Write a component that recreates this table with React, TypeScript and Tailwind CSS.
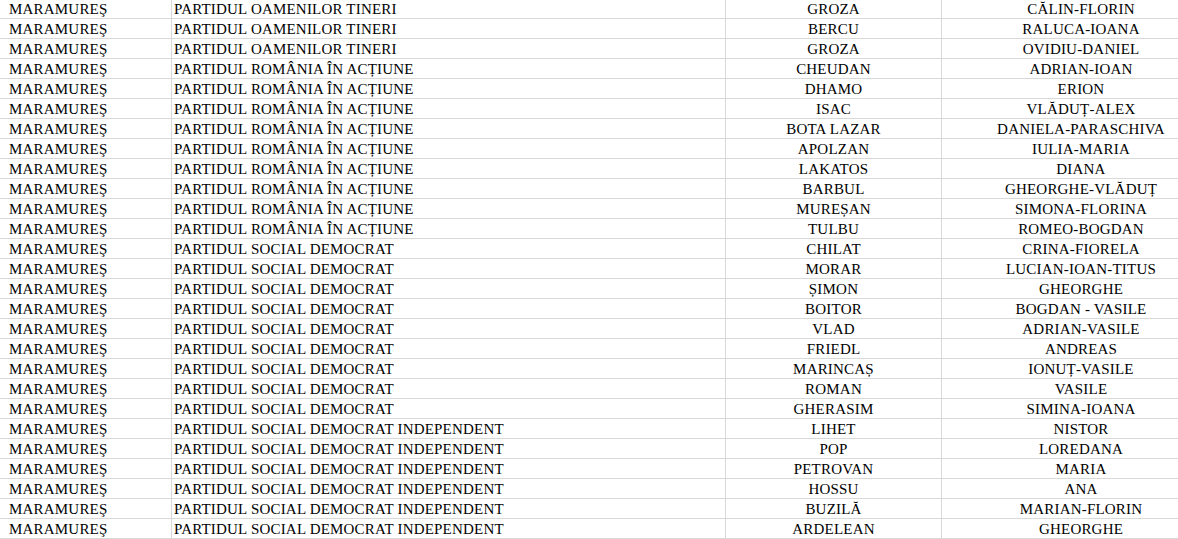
const rows: [string, string, string][] = [
  ['PARTIDUL OAMENILOR TINERI', 'GROZA', 'CĂLIN-FLORIN'],
  ['PARTIDUL OAMENILOR TINERI', 'BERCU', 'RALUCA-IOANA'],
  ['PARTIDUL OAMENILOR TINERI', 'GROZA', 'OVIDIU-DANIEL'],
  ['PARTIDUL ROMÂNIA ÎN ACȚIUNE', 'CHEUDAN', 'ADRIAN-IOAN'],
  ['PARTIDUL ROMÂNIA ÎN ACȚIUNE', 'DHAMO', 'ERION'],
  ['PARTIDUL ROMÂNIA ÎN ACȚIUNE', 'ISAC', 'VLĂDUȚ-ALEX'],
  ['PARTIDUL ROMÂNIA ÎN ACȚIUNE', 'BOTA LAZAR', 'DANIELA-PARASCHIVA'],
  ['PARTIDUL ROMÂNIA ÎN ACȚIUNE', 'APOLZAN', 'IULIA-MARIA'],
  ['PARTIDUL ROMÂNIA ÎN ACȚIUNE', 'LAKATOS', 'DIANA'],
  ['PARTIDUL ROMÂNIA ÎN ACȚIUNE', 'BARBUL', 'GHEORGHE-VLĂDUȚ'],
  ['PARTIDUL ROMÂNIA ÎN ACȚIUNE', 'MUREȘAN', 'SIMONA-FLORINA'],
  ['PARTIDUL ROMÂNIA ÎN ACȚIUNE', 'TULBU', 'ROMEO-BOGDAN'],
  ['PARTIDUL SOCIAL DEMOCRAT', 'CHILAT', 'CRINA-FIORELA'],
  ['PARTIDUL SOCIAL DEMOCRAT', 'MORAR', 'LUCIAN-IOAN-TITUS'],
  ['PARTIDUL SOCIAL DEMOCRAT', 'ȘIMON', 'GHEORGHE'],
  ['PARTIDUL SOCIAL DEMOCRAT', 'BOITOR', 'BOGDAN - VASILE'],
  ['PARTIDUL SOCIAL DEMOCRAT', 'VLAD', 'ADRIAN-VASILE'],
  ['PARTIDUL SOCIAL DEMOCRAT', 'FRIEDL', 'ANDREAS'],
  ['PARTIDUL SOCIAL DEMOCRAT', 'MARINCAȘ', 'IONUȚ-VASILE'],
  ['PARTIDUL SOCIAL DEMOCRAT', 'ROMAN', 'VASILE'],
  ['PARTIDUL SOCIAL DEMOCRAT', 'GHERASIM', 'SIMINA-IOANA'],
  ['PARTIDUL SOCIAL DEMOCRAT INDEPENDENT', 'LIHET', 'NISTOR'],
  ['PARTIDUL SOCIAL DEMOCRAT INDEPENDENT', 'POP', 'LOREDANA'],
  ['PARTIDUL SOCIAL DEMOCRAT INDEPENDENT', 'PETROVAN', 'MARIA'],
  ['PARTIDUL SOCIAL DEMOCRAT INDEPENDENT', 'HOSSU', 'ANA'],
  ['PARTIDUL SOCIAL DEMOCRAT INDEPENDENT', 'BUZILĂ', 'MARIAN-FLORIN'],
  ['PARTIDUL SOCIAL DEMOCRAT INDEPENDENT', 'ARDELEAN', 'GHEORGHE'],
];

export default function App() {
  return (
    <div className="w-[1178px] h-[539px] overflow-hidden bg-white text-black text-[15px] tracking-[0.2px] font-['Liberation_Serif',serif]">
      <div className="-mt-px w-[1220px]">
        {rows.map(([party, last, first], i) => (
          <div key={i} className="flex h-[20px] border-b border-[#d9d9d9] leading-[20px]">
            <div className="w-[172px] shrink-0 pl-[9px] border-r border-[#d9d9d9] whitespace-nowrap">MARAMUREŞ</div>
            <div className="w-[554px] shrink-0 pl-[2px] border-r border-[#d9d9d9] whitespace-nowrap">{party}</div>
            <div className="w-[216px] shrink-0 text-center border-r border-[#d9d9d9] whitespace-nowrap">{last}</div>
            <div className="w-[278px] shrink-0 text-center whitespace-nowrap">{first}</div>
          </div>
        ))}
      </div>
    </div>
  );
}
